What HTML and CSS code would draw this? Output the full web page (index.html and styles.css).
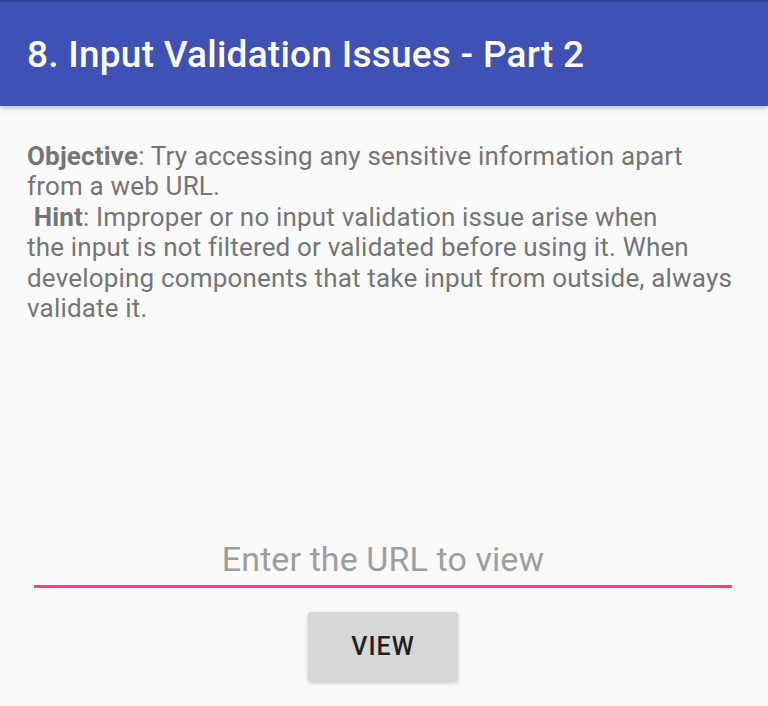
FILE: index.html
```html
<!DOCTYPE html>
<html lang="en">
<head>
    <meta charset="UTF-8">
    <meta name="viewport" content="width=device-width, initial-scale=1.0">
    <title>Input Validation Issues - Part 2</title>
    <link rel="stylesheet" href="styles.css">
</head>
<body>

    <!-- Toolbar -->
    <div class="toolbar">
        <h1 class="toolbar-title">8. Input Validation Issues - Part 2</h1>
    </div>

    <!-- Description -->
    <div class="content">
        <p class="description">
            <b>Objective</b>: Try accessing any sensitive information apart<br>
            from a web URL.<br>
            &nbsp;<b>Hint</b>: Improper or no input validation issue arise when<br>
            the input is not filtered or validated before using it. When<br>
            developing components that take input from outside, always<br>
            validate it.
        </p>
    </div>

    <!-- URL form -->
    <div class="form">
        <input type="text" class="url-input" placeholder="Enter the URL to view">
        <button class="view-button">VIEW</button>
    </div>

</body>
</html>
```

FILE: styles.css
```css
html, body {
    height: 100%;
}
body {
    margin: 0;
    background-color: #fafafa;
    font-family: Roboto, "Noto Sans", sans-serif;
    display: flex;
    flex-direction: column;
    overflow: hidden;
}
/* Toolbar */
.toolbar {
    height: 104px;
    background-color: #3f51b5;
    border-top: 2px solid #34449a;
    display: flex;
    align-items: center;
    padding-left: 27px;
    box-shadow: 0 2px 6px rgba(0, 0, 0, 0.25);
    position: relative;
    flex-shrink: 0;
}
.toolbar-title {
    margin: 0;
    color: #ffffff;
    font-size: 37px;
    font-weight: 500;
    letter-spacing: 0.25px;
}
/* Description */
.content {
    flex-grow: 1;
    padding: 0 27px;
}
.description {
    margin: 35px 0 0 0;
    color: #757575;
    font-size: 26px;
    line-height: 30.4px;
    letter-spacing: 0.18px;
}
.description b {
    font-weight: 700;
}
/* URL form */
.form {
    display: flex;
    flex-direction: column;
    align-items: center;
    padding: 0 36px 25px 34px;
}
.url-input {
    width: 100%;
    box-sizing: border-box;
    border: none;
    border-bottom: 3px solid #ff4081;
    background: transparent;
    font-family: Roboto, sans-serif;
    font-size: 34px;
    letter-spacing: 0.1px;
    text-align: center;
    color: #212121;
    padding: 0 0 6px 0;
    outline: none;
}
.url-input::placeholder {
    color: #9e9e9e;
}
.view-button {
    margin-top: 24px;
    width: 150px;
    height: 69px;
    background-color: #d6d7d7;
    border: none;
    border-radius: 3px;
    box-shadow: 0 2px 4px rgba(0, 0, 0, 0.2);
    font-family: Roboto, sans-serif;
    font-weight: 500;
    font-size: 25px;
    letter-spacing: 1px;
    color: #1f1f1f;
    cursor: pointer;
}
```
